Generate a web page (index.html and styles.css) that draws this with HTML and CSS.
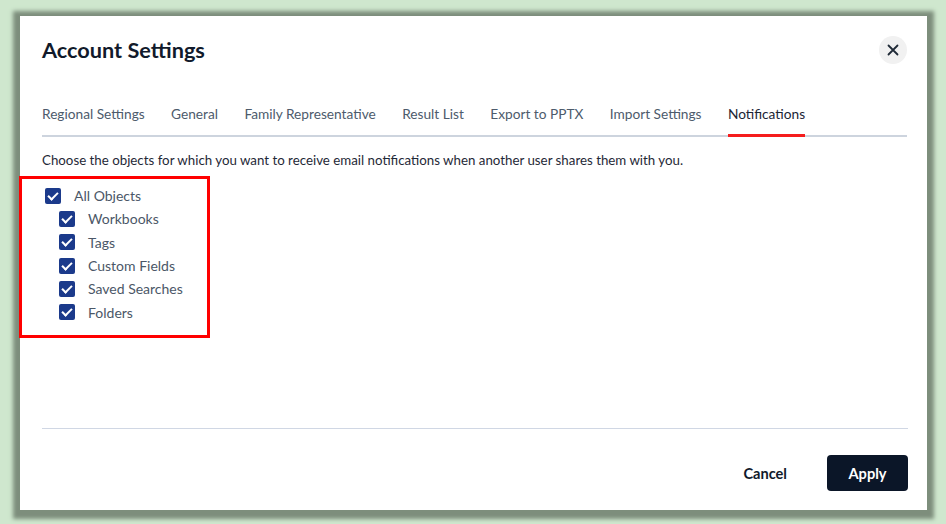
FILE: index.html
```html
<html>
  <head>
    <link rel="stylesheet" href="styles.css">
  </head>
  <body>
    <div class="dialog">
      <div class="header">
        <h1 class="title">Account Settings</h1>
        <button class="close" aria-label="Close">
          <svg width="12" height="12" viewBox="0 0 12 12">
            <path d="M1.5 1.5 L10.5 10.5 M10.5 1.5 L1.5 10.5" stroke="#1f2a37" stroke-width="1.8" stroke-linecap="round"/>
          </svg>
        </button>
      </div>
      <div class="tabs">
        <div class="tab">Regional Settings</div>
        <div class="tab">General</div>
        <div class="tab">Family Representative</div>
        <div class="tab">Result List</div>
        <div class="tab">Export to PPTX</div>
        <div class="tab">Import Settings</div>
        <div class="tab active">Notifications</div>
      </div>
      <div class="content">
        <p class="intro">Choose the objects for which you want to receive email notifications when another user shares them with you.</p>
        <ul class="checks">
          <li class="check"><span class="box"></span>All Objects</li>
          <li class="check sub"><span class="box"></span>Workbooks</li>
          <li class="check sub"><span class="box"></span>Tags</li>
          <li class="check sub"><span class="box"></span>Custom Fields</li>
          <li class="check sub"><span class="box"></span>Saved Searches</li>
          <li class="check sub"><span class="box"></span>Folders</li>
        </ul>
      </div>
      <div class="footer">
        <button class="btn cancel">Cancel</button>
        <button class="btn apply">Apply</button>
      </div>
      <div class="highlight"></div>
    </div>
  </body>
</html>
```

FILE: styles.css
```css
body {
    margin: 0;
    background: #cfe7ce;
    font-family: Lato, "Open Sans", sans-serif;
    height: 524px;
    overflow: hidden;
}
.dialog {
    position: relative;
    margin: 16px 0 0 20px;
    width: 907px;
    height: 494px;
    background: #fff;
    box-shadow: 0 2px 4px 7px #7d8e7c;
    display: flex;
    flex-direction: column;
    box-sizing: border-box;
    padding: 20px 20px 0 22px;
}
.header {
    display: flex;
    align-items: center;
    justify-content: space-between;
    height: 28px;
}
.title {
    margin: 0;
    font-size: 21.7px;
    font-weight: 700;
    color: #111a2b;
}
.close {
    width: 28px;
    height: 28px;
    border: none;
    border-radius: 50%;
    background: #f1f1f1;
    padding: 0;
    display: flex;
    align-items: center;
    justify-content: center;
}
.tabs {
    display: flex;
    gap: 26.4px;
    margin-top: 40px;
    border-bottom: 2px solid #cdd4de;
}
.tab {
    font-size: 13.7px;
    line-height: 20px;
    color: #4d5b6c;
    padding-bottom: 10px;
    border-bottom: 3px solid transparent;
    margin-bottom: -2px;
}
.tab.active {
    color: #1b2535;
    border-bottom-color: #f51d1d;
}
.content {
    flex: 1;
}
.intro {
    margin: 13px 0 0;
    font-size: 13.3px;
    line-height: 20px;
    color: #1f2937;
}
.checks {
    list-style: none;
    margin: 14px 0 0;
    padding: 0 0 0 3px;
}
.check {
    display: flex;
    align-items: center;
    height: 23.3px;
    font-size: 14px;
    color: #4b5767;
}
.check.sub {
    padding-left: 14px;
}
.box {
    width: 16px;
    height: 16px;
    border-radius: 2px;
    background: #1b3a8b;
    margin-right: 13px;
    position: relative;
}
.box::after {
    content: "";
    position: absolute;
    left: 5px;
    top: 2px;
    width: 4px;
    height: 8px;
    border: solid #fff;
    border-width: 0 2px 2px 0;
    transform: rotate(45deg);
}
.footer {
    border-top: 1px solid #d0d7e4;
    display: flex;
    justify-content: flex-end;
    align-items: center;
    gap: 24px;
    padding: 26px 0 19px;
    margin-right: -1px;
}
.btn {
    font-family: Lato, "Open Sans", sans-serif;
    font-size: 14.6px;
    font-weight: 700;
    height: 36px;
    border: none;
    border-radius: 4px;
    padding: 0 16px;
}
.cancel {
    background: transparent;
    color: #111a2b;
}
.apply {
    width: 81px;
    background: #0b1628;
    color: #fff;
}
.highlight {
    position: absolute;
    left: -1px;
    top: 160px;
    width: 191px;
    height: 162px;
    box-sizing: border-box;
    border: 3px solid #ff0000;
}
```
